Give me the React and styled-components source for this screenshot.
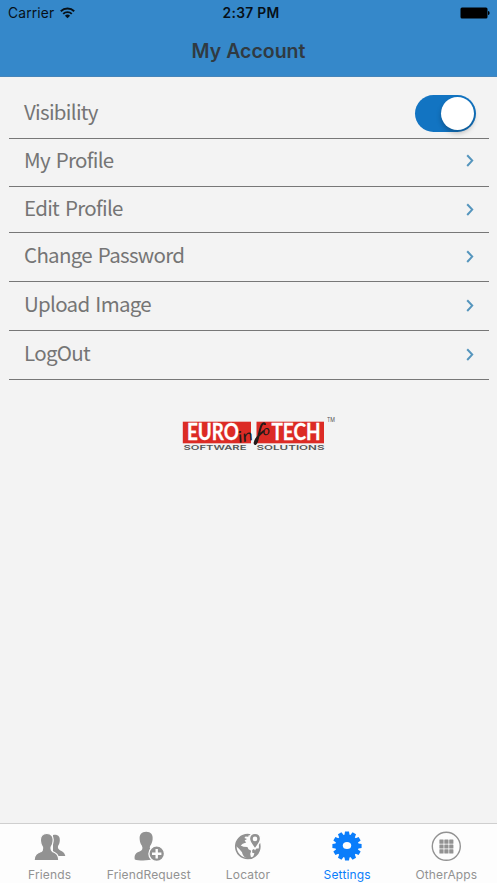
import React, { useState } from "react";
import styled, { createGlobalStyle } from "styled-components";

const GlobalStyle = createGlobalStyle`
  * {
    box-sizing: border-box;
  }

  body {
    margin: 0;
    background-color: #f3f3f3;
    font-family: Inter, "Liberation Sans", sans-serif;
  }
`;

const Screen = styled.div`
  display: flex;
  flex-direction: column;
  width: 100%;
  height: 100vh;
  overflow: hidden;
  background-color: #f3f3f3;
`;

const Header = styled.header`
  height: 77px;
  flex: none;
  background-color: #3588ca;
  border-bottom: 1px solid #4685ba;
`;

const StatusBar = styled.div`
  display: grid;
  grid-template-columns: 1fr auto 1fr;
  align-items: center;
  height: 25px;
  padding: 0 7px 0 8px;
  color: #071018;
`;

const Carrier = styled.div`
  display: flex;
  align-items: center;
  gap: 6px;
  font-size: 13.8px;
  letter-spacing: 0.15px;
`;

const Clock = styled.div`
  padding-left: 4px;
  font-size: 13.8px;
  font-weight: 600;
  letter-spacing: 0.3px;
`;

const Battery = styled.svg`
  justify-self: end;
`;

const Title = styled.h1`
  margin: 0;
  font-size: 19.5px;
  font-weight: 600;
  line-height: 52px;
  text-align: center;
  color: #303a42;
`;

const List = styled.ul`
  flex: none;
  margin: 0;
  padding: 0 8px 0 9px;
  list-style: none;
`;

const Row = styled.li`
  display: flex;
  align-items: center;
  justify-content: space-between;
  height: ${(props) => props.$height}px;
  padding: ${(props) => props.$top || 0}px 13px ${(props) => props.$bottom || 0}px 15px;
  border-bottom: 1px solid #777;
`;

const Label = styled.span`
  padding-bottom: ${(props) => (props.$low ? 4 : 6)}px;
  font-family: "Noto Sans CJK SC", "Noto Sans", sans-serif;
  font-size: 20.5px;
  line-height: 28px;
  letter-spacing: -0.7px;
  word-spacing: 2px;
  color: #757575;
`;

const Switch = styled.button`
  display: flex;
  justify-content: ${(props) => (props.$on ? "flex-end" : "flex-start")};
  width: 61px;
  height: 37px;
  padding: 2px;
  border: 0;
  border-radius: 19px;
  background-color: ${(props) => (props.$on ? "#1274c2" : "#d0d0d0")};
`;

const Knob = styled.span`
  width: 33px;
  height: 33px;
  border-radius: 50%;
  background-color: #fff;
  box-shadow: 0 3px 5px rgba(0, 0, 0, 0.25);
`;

const Brand = styled.div`
  flex: 1;
  padding: 35px 0 0 180px;
`;

const TabBar = styled.nav`
  display: grid;
  grid-template-columns: repeat(5, 1fr);
  flex: none;
  height: 60px;
  padding-right: 1px;
  border-top: 1px solid #cfcfcf;
  background-color: #fdfdfd;
`;

const Tab = styled.div`
  display: flex;
  flex-direction: column;
  align-items: center;
  padding-top: 6px;
  color: ${(props) => (props.$active ? "#0a7dfb" : "#929292")};
`;

const TabLabel = styled.span`
  margin-top: 5px;
  font-size: 12px;
  line-height: 16px;
  letter-spacing: 0.15px;
`;

const WifiIcon = () => (
  <svg width="15" height="12" viewBox="0 0 15 12" fill="none" stroke="currentColor" strokeWidth="1.9">
    <path d="M.8 4.2a9.6 9.6 0 0 1 13.4 0M3.2 6.9a6.2 6.2 0 0 1 8.6 0" />
    <path d="M7.5 11.3 4.9 8.8a3.8 3.8 0 0 1 5.2 0z" fill="currentColor" stroke="none" />
  </svg>
);

const Chevron = () => (
  <svg width="10" height="14" viewBox="0 0 10 14" fill="none" stroke="#5595bd" strokeWidth="2">
    <path d="m1.2 1.2 5 5.4-5 5.4" />
  </svg>
);

const FriendsIcon = () => (
  <svg width="32" height="32" viewBox="0 0 32 32" fill="currentColor">
    <path d="M19 5c4.4-1 7.2 1.2 6.8 5.6-.1 2.3-.7 4-1.8 5.4-.3 1.9.1 2.9 1.3 3.7 3 1.8 5.3 2.5 6 6.3H19z" />
    <path
      d="M12.8 3.5c4.8 0 6.8 2.8 6.3 7.7-.2 2.5-.8 4.3-2 5.8-.3 2.3-.1 3.6 1.3 4.4 3.3 1.7 6.2 2.7 6.5 9.2H0c.3-6.5 3.5-7.5 7.2-9.2 1.5-.8 1.6-2.1 1.3-4.4-1.2-1.5-1.8-3.3-2-5.8-.5-4.9 1.5-7.7 6.3-7.7z"
      stroke="#fdfdfd"
      strokeWidth="1.2"
    />
  </svg>
);

const RequestIcon = () => (
  <svg width="32" height="32" viewBox="0 0 32 32" fill="currentColor">
    <path d="M13.2 1.8c4.7 0 7 3 6.4 7.7-.3 2.6-1 4.2-2.2 6-.8 1.2-.8 3 .2 4.2 1.2 1.4 3.3 1.8 5.2 2.8 1 3.5.2 5.4-2.3 6.6-5 2-15.3 1.7-18.7.5-.9-4.7 1.2-6.9 4.8-8.1 2.8-1 3.6-3 2.2-6-1.3-1.7-1.9-3.4-2.1-6-.6-4.7 1.8-7.7 6.5-7.7z" />
    <circle cx="23.7" cy="23.7" r="7.8" stroke="#fdfdfd" strokeWidth="1.3" />
    <path d="M23.7 19v9.4M19 23.7h9.4" stroke="#fdfdfd" strokeWidth="2.4" />
  </svg>
);

const LocatorIcon = () => (
  <svg width="32" height="32" viewBox="0 0 32 32">
    <circle cx="15.8" cy="16.5" r="12" fill="#fdfdfd" stroke="currentColor" strokeWidth="1.7" />
    <path
      d="M8 7.2c2.5-2 5.6-3 8.7-2.5l-.4 2.1-2.8-.2-1.1 1.5 2.6 1-2.4 1.3 1.6 2.2-3.4 1.1-2.1 1.9 2.7 1.2 4 .2 1.1 2.2 2.7 1.5-1 3.4 1.1 4.7c-5.3.2-8.4-2-9.3-6.5L7 18.7l-3-2.8C3.9 12.3 5.4 9.3 8 7.2zM20.2 20l2.5-1.6h4.7c-.6 4-2.8 7-6.3 8.7l1.3-3.8-2.2-.5z"
      fill="currentColor"
    />
    <path
      d="M23 3.2c3.3 0 5.6 2.4 5.6 5.6 0 3.9-3.5 6.8-5.6 10.2-2.1-3.4-5.6-6.3-5.6-10.2 0-3.2 2.3-5.6 5.6-5.6z"
      fill="currentColor"
      stroke="#fdfdfd"
      strokeWidth="1.5"
    />
    <circle cx="23" cy="8.9" r="2.3" fill="#fdfdfd" />
  </svg>
);

const GearIcon = () => (
  <svg width="32" height="32" viewBox="-16 -16 32 32" fill="currentColor">
    <circle r="11.6" />
    {Array.from({ length: 12 }, (_, i) => (
      <path key={i} d="m-2.7-10 .7-4.6h4l.7 4.6z" transform={`rotate(${i * 30})`} />
    ))}
    <ellipse cy="-.6" rx="4.2" ry="3.5" fill="#fdfdfd" />
  </svg>
);

const AppsIcon = () => (
  <svg width="32" height="32" viewBox="0 0 32 32" fill="currentColor">
    <circle cx="16.3" cy="16.3" r="14" fill="none" stroke="currentColor" strokeWidth="1.4" />
    {[9.5, 14.4, 19.3].map((y) =>
      [9.4, 14.3, 19.2].map((x) => <rect key={`${x}-${y}`} x={x} y={y} width="4.2" height="4.2" rx=".5" />)
    )}
  </svg>
);

const Logo = () => (
  <svg width="160" height="40" viewBox="0 0 160 40">
    <rect x="2.8" y="6.7" width="68.2" height="21.6" fill="#dc2b25" />
    <rect x="76.5" y="6.7" width="67.5" height="21.6" fill="#dc2b25" />
    <g
      fill="#fff"
      stroke="#fff"
      strokeWidth=".3"
      fontFamily="Lato, sans-serif"
      fontWeight="700"
      fontSize="22"
    >
      <text x="7" y="25.3" textLength="52" lengthAdjust="spacingAndGlyphs">EURO</text>
      <text x="91.5" y="25.3" textLength="49" lengthAdjust="spacingAndGlyphs">TECH</text>
    </g>
    <g fill="#241a18" fontFamily="Lato, sans-serif" fontStyle="italic">
      <text transform="translate(59 28) rotate(-12)" fontSize="16" textLength="15" lengthAdjust="spacingAndGlyphs">in</text>
      <path
        d="M85 10c.3-2.6-2.2-2.3-3.5.4-2 4.4-2.8 11-4.6 16.4-.8 2.4-2.4 3.1-2.2.8.5-3.5 5.6-8.7 9.3-11.8"
        fill="none"
        stroke="#241a18"
        strokeWidth="2"
      />
      <text transform="translate(83 20.5) rotate(-5)" fontSize="14">o</text>
    </g>
    <g fill="#555" fontFamily="Inter, sans-serif" fontWeight="600" fontSize="6.6">
      <text x="3.5" y="35.2" textLength="63" lengthAdjust="spacingAndGlyphs">SOFTWARE</text>
      <text x="76.5" y="35.2" textLength="68" lengthAdjust="spacingAndGlyphs">SOLUTIONS</text>
    </g>
    <text x="147" y="7.3" fill="#555" fontFamily="Inter, sans-serif" fontSize="5.7" textLength="8" lengthAdjust="spacingAndGlyphs">TM</text>
  </svg>
);

const rows = [
  { label: "My Profile", height: 48, bottom: 3, low: true },
  { label: "Edit Profile", height: 46 },
  { label: "Change Password", height: 49 },
  { label: "Upload Image", height: 49 },
  { label: "LogOut", height: 49 },
];

const tabs = [
  { label: "Friends", icon: <FriendsIcon /> },
  { label: "FriendRequest", icon: <RequestIcon /> },
  { label: "Locator", icon: <LocatorIcon /> },
  { label: "Settings", icon: <GearIcon />, active: true },
  { label: "OtherApps", icon: <AppsIcon /> },
];

const App = () => {
  const [visible, setVisible] = useState(true);

  return (
    <Screen>
      <GlobalStyle />
      <Header>
        <StatusBar>
          <Carrier>
            Carrier <WifiIcon />
          </Carrier>
          <Clock>2:37 PM</Clock>
          <Battery width="30" height="12" viewBox="0 0 30 12">
            <rect x=".5" y=".5" width="27" height="11" rx="1.5" />
            <path d="M28 4c1 0 1.6.8 1.6 2s-.6 2-1.6 2z" />
          </Battery>
        </StatusBar>
        <Title>My Account</Title>
      </Header>
      <List>
        <Row $height={62} $top={11}>
          <Label $low>Visibility</Label>
          <Switch $on={visible} aria-label="Visibility" onClick={() => setVisible(!visible)}>
            <Knob />
          </Switch>
        </Row>
        {rows.map((row) => (
          <Row key={row.label} $height={row.height} $bottom={row.bottom}>
            <Label $low={row.low}>{row.label}</Label>
            <Chevron />
          </Row>
        ))}
      </List>
      <Brand>
        <Logo />
      </Brand>
      <TabBar>
        {tabs.map((tab) => (
          <Tab key={tab.label} $active={tab.active}>
            {tab.icon}
            <TabLabel>{tab.label}</TabLabel>
          </Tab>
        ))}
      </TabBar>
    </Screen>
  );
};

export default App;
